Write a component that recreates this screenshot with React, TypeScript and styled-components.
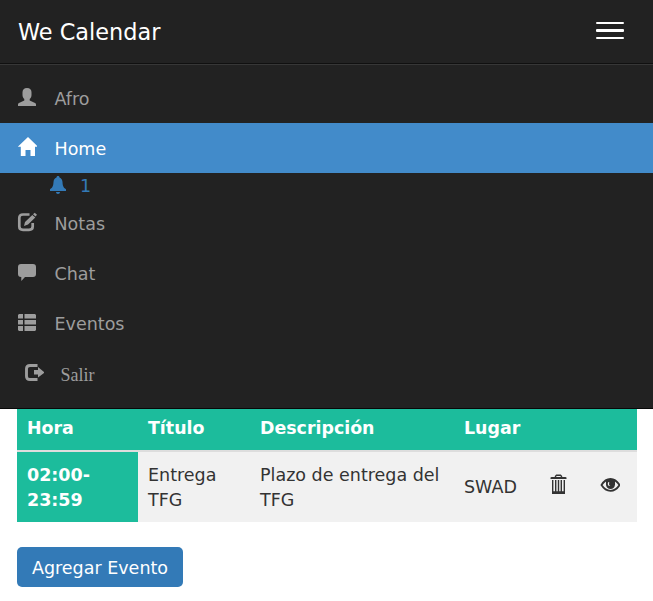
import React from "react";
import styled, { createGlobalStyle } from "styled-components";

const GlobalStyle = createGlobalStyle`
  * { box-sizing: border-box; }
  body {
    margin: 0;
    background: #fff;
    color: #333;
    font: 17.5px/25px "DejaVu Sans", Verdana, sans-serif;
    overflow: hidden;
  }
`;

const Navbar = styled.nav`
  height: 409px;
  background: #222;
  border-bottom: 1px solid #080808;
`;

const Header = styled.header`
  display: flex;
  align-items: center;
  justify-content: space-between;
  height: 64px;
  padding: 0 29px 0 18px;
  border-bottom: 1px solid #101010;
`;

const Brand = styled.span`
  color: #fff;
  font-size: 22.4px;
  padding-top: 1px;
`;

const Toggle = styled.button`
  display: flex;
  flex-direction: column;
  gap: 5px;
  padding: 0;
  margin-top: -2px;
  border: 0;
  background: none;
`;

const Bar = styled.span<{ $thick?: boolean }>`
  width: 28px;
  height: ${(p) => (p.$thick ? 3 : 2)}px;
  border-radius: 1px;
  background: #fff;
`;

const Menu = styled.ul`
  list-style: none;
  margin: 0;
  padding: 8px 0 0;
  border-top: 1px solid #373737;
`;

const Icon = styled.svg`
  display: block;
  flex: none;
  width: 20px;
  height: 20px;
  margin-top: -4px;
  fill: currentColor;
`;

const Item = styled.li<{ $active?: boolean }>`
  display: flex;
  align-items: center;
  height: 50px;
  padding: 2px 0 0 17px;
  gap: 17.5px;
  color: ${(p) => (p.$active ? "#fff" : "#9d9d9d")};
  background: ${(p) => (p.$active ? "#428bca" : "transparent")};
`;

const Notice = styled.li`
  display: flex;
  align-items: center;
  height: 25px;
  padding: 2px 0 0 48px;
  gap: 12px;
  color: #337ab7;
`;

const Logout = styled(Item)`
  padding: 4px 0 0 24px;
  gap: 16.5px;
  font: 18px/25px "Liberation Serif", "Times New Roman", serif;

  ${Icon} { margin-top: -6px; }
`;

const Content = styled.main`
  padding: 0 16px 0 17px;
`;

const Table = styled.table`
  width: 620px;
  table-layout: fixed;
  border-collapse: separate;
  border-spacing: 0;
  margin-bottom: 25px;
`;

const HeadCell = styled.th`
  height: 43px;
  padding: 0 10px 2px;
  text-align: left;
  font-weight: bold;
  font-size: 17.4px;
  color: #fff;
  background: #1cbc9c;
  border-bottom: 2px solid #ddd;
`;

const Cell = styled.td<{ $time?: boolean; $single?: boolean }>`
  height: 70px;
  padding: ${(p) => (p.$single ? 0 : 2)}px 10px 0;
  background: ${(p) => (p.$time ? "#1cbc9c" : "#f1f1f1")};
  color: ${(p) => (p.$time ? "#fff" : "#333")};
  font-weight: ${(p) => (p.$time ? "bold" : "normal")};

  ${Icon} { margin-top: -6px; }
`;

const AddButton = styled.button`
  display: block;
  width: 166px;
  height: 40px;
  padding: 2px 0 0;
  color: #fff;
  background: #337ab7;
  border: 0;
  border-radius: 5px;
  font: inherit;
  white-space: nowrap;
`;

const UserIcon = () => (
  <Icon viewBox="0 0 20 20"><path d="M10 1C7 1 5.500 2.600 5.500 5.300V8c0 1.700.7 3.100 1.800 4v1.400l-4.800 2.300C1.500 16.200 1 16.600 1 17.500V19h18v-1.500c0-.9-.5-1.300-1.500-1.800l-4.800-2.300V12c1.200-.9 1.800-2.300 1.800-4V5.300C14.500 2.600 13 1 10 1z" /></Icon>
);
const HomeIcon = () => (
  <Icon viewBox="0 0 20 20"><path d="M11 0l10 9.700h-3V19h-4.500v-6h-5v6H3.800V9.700H.8z" /></Icon>
);
const BellIcon = () => (
  <Icon viewBox="0 0 20 20"><path d="M10 1c1 0 1.500.6 1.500 1.500 2 .8 2.800 2.400 3 4.500.2 3.700.7 5.500 3.500 7.200V16H2v-1.800C4.800 12.500 5.300 10.700 5.500 7c.2-2.100 1-3.700 3-4.500C8.500 1.600 9 1 10 1zm-2 16h4c0 1.200-.9 2-2 2s-2-.8-2-2z" /></Icon>
);
const EditIcon = () => (
  <Icon viewBox="0 0 20 20"><path d="M12.500 2.500H6C3.500 2.500 2.300 3.700 2.300 6v8.500c0 2.300 1.200 3.300 3.700 3.300h6c2.500 0 3.700-1 3.700-3.300V11" fill="none" stroke="currentColor" strokeWidth="2.700" /><path d="M7 14l1-4 7.300-7 3 2.600-7.300 7zM16 2.300l1.700-1.600 2.300 2-1.500 1.900z" /></Icon>
);
const ChatIcon = () => (
  <Icon viewBox="0 0 20 20"><path d="M4 2h12c2 0 3 1 3 3v7c0 2-1 3-3 3H8l-3.700 4v-4H4c-2 0-3-1-3-3V5c0-2 1-3 3-3z" /></Icon>
);
const ListIcon = () => (
  <Icon viewBox="0 0 20 20"><path d="M2 2h4v4.500H1V3zM7.500 2H18l1 1v3.500H7.500zM1 8h5v4.500H1zM7.500 8H19v4.500H7.500zM1 14h5v5H2l-1-1zM7.500 14H19v4l-1 1H7.500z" /></Icon>
);
const LogoutIcon = () => (
  <Icon viewBox="0 0 20 20"><path d="M13.500 3.500H6C3.500 3.500 2.500 4.400 2.500 6.800v7.400c0 2.400 1 3.300 3.500 3.300h7.500" fill="none" stroke="currentColor" strokeWidth="2.900" /><path d="M10 8h4V5l6.500 5.500-6.500 5v-3h-4z" /></Icon>
);
const TrashIcon = () => (
  <Icon viewBox="0 0 20 20"><path d="M5.500 3V2.200l1-1h4l1 1V3M2.700 6v12h11.600V6M5.700 6v12M8.500 6v12M11.300 6v12" fill="none" stroke="currentColor" strokeWidth="1.400" /><path d="M.5 3.500L1.500 3h14l1 .5V5H.5zM2 18h13v2H2z" /></Icon>
);
const EyeIcon = () => (
  <Icon viewBox="0 0 20 20"><path d="M1.500 11C4 6.900 6.700 5 10.500 5s6.500 1.900 9 6c-2.500 4-5.200 5.800-9 5.800S4 15 1.500 11z" fill="none" stroke="currentColor" strokeWidth="1.800" /><path d="M6 5.500h9v5A4.500 4.500 0 016 10.500z" /><path d="M8.200 8c-1 2.300-.2 4.500 2.200 4-1.400-.8-1.800-2-1-3.600z" fill="#f1f1f1" /></Icon>
);

export default function App() {
  return (
    <>
      <GlobalStyle />
      <Navbar>
        <Header>
          <Brand>We Calendar</Brand>
          <Toggle aria-label="Menu"><Bar /><Bar $thick /><Bar /></Toggle>
        </Header>
        <Menu>
          <Item><UserIcon />Afro</Item>
          <Item $active><HomeIcon />Home</Item>
          <Notice><BellIcon />1</Notice>
          <Item><EditIcon />Notas</Item>
          <Item><ChatIcon />Chat</Item>
          <Item><ListIcon />Eventos</Item>
          <Logout><LogoutIcon />Salir</Logout>
        </Menu>
      </Navbar>
      <Content>
        <Table>
          <colgroup>
            <col style={{ width: 121 }} /><col style={{ width: 112 }} /><col style={{ width: 204 }} />
            <col style={{ width: 86 }} /><col style={{ width: 50 }} /><col style={{ width: 47 }} />
          </colgroup>
          <thead>
            <tr>
              <HeadCell>Hora</HeadCell><HeadCell>Título</HeadCell><HeadCell>Descripción</HeadCell>
              <HeadCell>Lugar</HeadCell><HeadCell /><HeadCell />
            </tr>
          </thead>
          <tbody>
            <tr>
              <Cell $time>02:00-<br />23:59</Cell>
              <Cell>Entrega TFG</Cell>
              <Cell>Plazo de entrega del TFG</Cell>
              <Cell $single>SWAD</Cell>
              <Cell $single><TrashIcon /></Cell>
              <Cell $single><EyeIcon /></Cell>
            </tr>
          </tbody>
        </Table>
        <AddButton>Agregar Evento</AddButton>
      </Content>
    </>
  );
}
